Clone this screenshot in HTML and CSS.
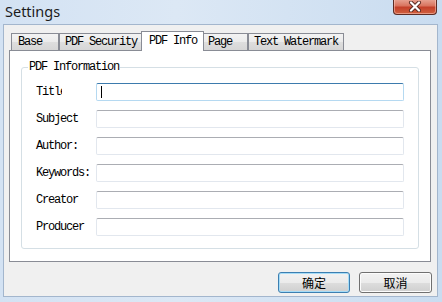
FILE: index.html
```html
<!DOCTYPE html>
<html lang="en">
<head>
    <meta charset="UTF-8">
    <title>Settings</title>
    <link rel="stylesheet" href="styles.css">
</head>
<body>
    <div class="window">
        <div class="titlebar">
            <span class="title">Settings</span>
            <button class="close" aria-label="Close">
                <svg width="14" height="11" viewBox="0 0 14 11">
                    <path d="M3 1.5 L11 9.5 M11 1.5 L3 9.5" stroke="#5a2a22" stroke-width="4" stroke-linecap="round"/>
                    <path d="M3 1.5 L11 9.5 M11 1.5 L3 9.5" stroke="#ffffff" stroke-width="2.2" stroke-linecap="round"/>
                </svg>
            </button>
        </div>

        <div class="client">
            <div class="tabs">
                <div class="tab tab-base">Base</div>
                <div class="tab">PDF Security</div>
                <div class="tab active">PDF Info</div>
                <div class="tab tab-page">Page</div>
                <div class="tab">Text Watermark</div>
            </div>

            <div class="panel">
                <fieldset class="group">
                    <legend>PDF Information</legend>
                    <div class="row">
                        <label class="label"><span class="clip">Title</span></label>
                        <div class="field focused"><span class="caret"></span></div>
                    </div>
                    <div class="row">
                        <label class="label">Subject</label>
                        <div class="field"></div>
                    </div>
                    <div class="row">
                        <label class="label">Author:</label>
                        <div class="field"></div>
                    </div>
                    <div class="row">
                        <label class="label">Keywords:</label>
                        <div class="field"></div>
                    </div>
                    <div class="row">
                        <label class="label">Creator</label>
                        <div class="field"></div>
                    </div>
                    <div class="row">
                        <label class="label">Producer</label>
                        <div class="field"></div>
                    </div>
                </fieldset>
            </div>

            <div class="buttons">
                <button class="btn default">确定</button>
                <button class="btn">取消</button>
            </div>
        </div>
    </div>
</body>
</html>
```

FILE: styles.css
```css
body {
    margin: 0;
    padding: 0;
    background-color: #c6d9ee;
}
.window {
    width: 442px;
    height: 302px;
    display: flex;
    flex-direction: column;
    background: linear-gradient(to right, #d3e2f3 0%, #dce8f5 40%, #c9dcf0 100%);
}
.titlebar {
    height: 24px;
    display: flex;
    align-items: flex-start;
    padding-left: 5px;
}
.title {
    font-family: "Noto Sans", "Open Sans", sans-serif;
    font-size: 14.5px;
    line-height: 22px;
    color: #1b1b1b;
}
.close {
    margin-left: auto;
    margin-right: 5px;
    margin-top: -1px;
    width: 44px;
    height: 16px;
    padding: 0;
    border: 1px solid #5d2c24;
    border-top: none;
    border-radius: 0 0 4px 4px;
    background: linear-gradient(#e9a797 0%, #d9745f 45%, #c4402a 55%, #d0613f 100%);
    box-shadow: inset 0 0 0 1px rgba(255, 210, 200, 0.5);
    display: flex;
    align-items: center;
    justify-content: center;
}
.client {
    margin: 0 4px 4px 3px;
    border: 1px solid #a3b6cd;
    background-color: #f0f0f0;
    padding: 6px 6px 3px 5px;
    font-family: "Liberation Mono", "Courier New", monospace;
    font-size: 12px;
    letter-spacing: -1.2px;
    color: #000;
}
.tabs {
    display: flex;
    align-items: flex-end;
    height: 19px;
    padding-left: 2px;
}
.tab {
    box-sizing: border-box;
    height: 17px;
    line-height: 16px;
    padding: 0 5px;
    border: 1px solid #898c95;
    border-bottom: none;
    background: linear-gradient(#f3f3f3 0%, #ebebeb 50%, #dedede 51%, #d6d6d6 100%);
    white-space: nowrap;
}
.tab-base {
    width: 48px;
    padding-left: 6px;
}
.tab-page {
    width: 46px;
}
.tab.active {
    position: relative;
    z-index: 1;
    height: 20px;
    line-height: 18px;
    margin: 0 -2px -1px -2px;
    padding: 0 6px 0 7px;
    background: #ffffff;
}
.panel {
    height: 212px;
    box-sizing: border-box;
    border: 1px solid #898c95;
    background-color: #ffffff;
    padding: 9px 11px 0 11px;
}
.group {
    margin: 0;
    border: 1px solid #d5dfe5;
    border-radius: 3px;
    padding: 9px 14px 12px 13px;
    display: flex;
    flex-direction: column;
    gap: 9px;
}
.group legend {
    margin-left: -7px;
    padding: 0 1px;
    line-height: 14px;
}
.row {
    display: flex;
    align-items: center;
    height: 18px;
}
.label {
    width: 61px;
    flex-shrink: 0;
    padding-left: 1px;
    box-sizing: border-box;
}
.clip {
    display: inline-block;
    width: 26px;
    overflow: hidden;
    vertical-align: top;
}
.field {
    flex: 1;
    height: 18px;
    box-sizing: border-box;
    border: 1px solid #e2e7ee;
    border-top-color: #abadb3;
    border-radius: 2px;
    background: #ffffff;
    display: flex;
    align-items: center;
}
.field.focused {
    border-color: #b5d9f1;
    border-top-color: #3d7bad;
}
.caret {
    width: 1px;
    height: 12px;
    margin-left: 4px;
    background: #000;
}
.buttons {
    display: flex;
    justify-content: flex-end;
    gap: 9px;
    margin-top: 10px;
    margin-right: -1px;
}
.btn {
    width: 73px;
    height: 21px;
    padding: 0;
    border: 1px solid #707070;
    border-radius: 3px;
    background: linear-gradient(#f2f2f2 0%, #ebebeb 50%, #dddddd 51%, #cfcfcf 100%);
    box-shadow: inset 0 0 0 1px #fcfcfc;
    font-family: "Noto Sans CJK SC", sans-serif;
    font-size: 12px;
    line-height: 18px;
    color: #000;
    letter-spacing: 0;
}
.btn.default {
    width: 72px;
    border-color: #3c7fb1;
    box-shadow: inset 0 0 0 1px #a6dcf7;
}
```
